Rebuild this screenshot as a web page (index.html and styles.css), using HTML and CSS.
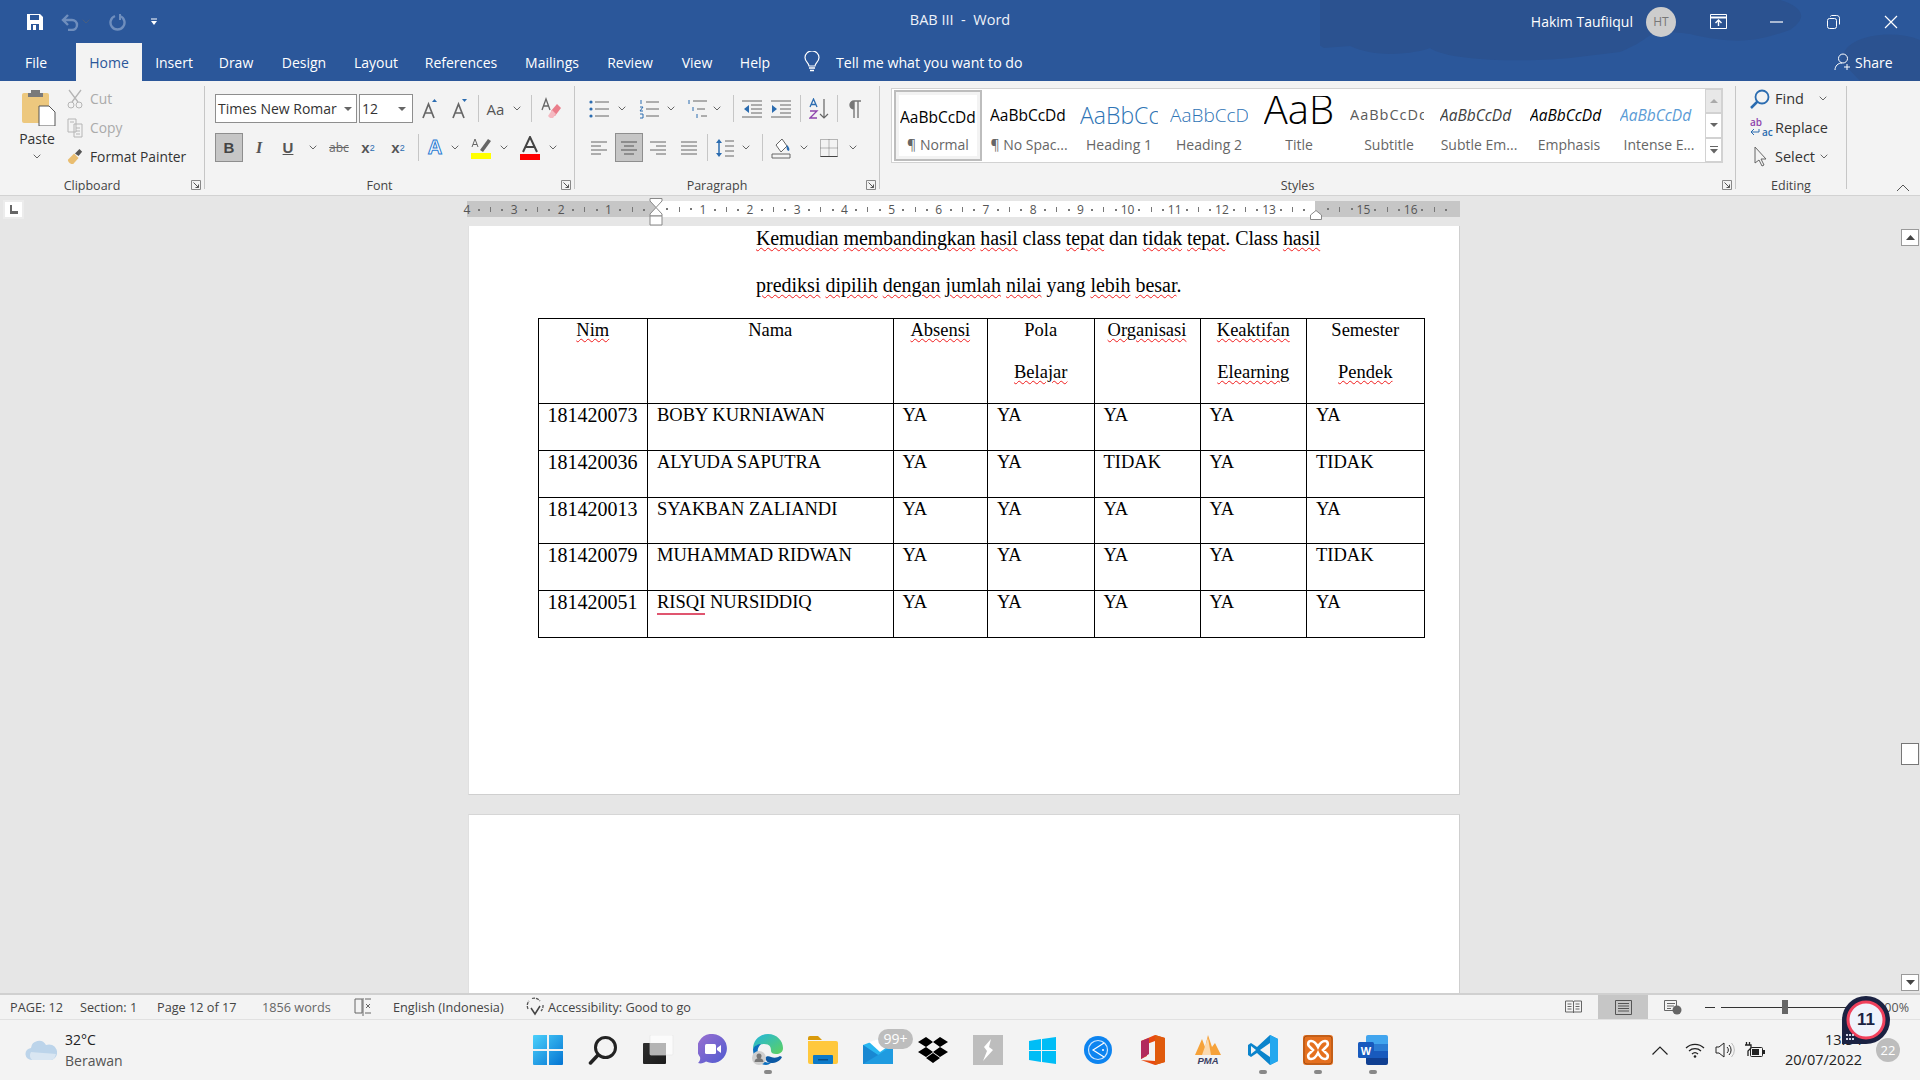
FILE: index.html
```html
<!DOCTYPE html>
<html lang="en">
<head>
<meta charset="utf-8">
<title>BAB III - Word</title>
<link rel="stylesheet" href="styles.css">
</head>
<body>
<svg class="defs" width="0" height="0">
  <symbol id="chev" viewBox="0 0 8 5"><path d="M.7.7 4 4 7.3.7" fill="none" stroke="#666" stroke-width="1"/></symbol>
  <symbol id="launch" viewBox="0 0 10 10"><path d="M.5 9.5V.5h9v9z" fill="none" stroke="#888"/><path d="M2.5 2.5 7.5 7.5M7.5 4.5v3h-3" fill="none" stroke="#555"/></symbol>
</svg>
<div class="app">
  <div class="chrome">
    <svg class="brand" width="600" height="81" viewBox="0 0 600 81"><path d="M0 0C-10 20-10 42 4 48L30 46C60 60 100 52 110 48 130 62 210 62 250 58L300 52C340 36 320 28 370 34 420 46 440 40 470 30 500 10 460 0 460 0z" fill="#2b5290"/><path d="M522 62C520 36 570 28 600 40V81H540z" fill="#2b5290"/></svg>
    <header class="titlebar">
      <div class="qat">
        <svg width="18" height="18" viewBox="0 0 18 18"><path d="M1 1h13l3 3v13H1z" fill="#fff"/><path d="M4 2h9v5H4z" fill="#2b579a"/><path d="M5 11h8v6H5z" fill="#2b579a"/><path d="M7 12h3v5H7z" fill="#fff"/></svg>
        <svg class="qat-undo" width="20" height="18" viewBox="0 0 20 18"><path d="M8 2 3 7l5 5M3 7h9a5 5 0 0 1 0 10H8" fill="none" stroke="#6f8ebd" stroke-width="2.4"/></svg>
        <svg class="qat-chev" width="8" height="5"><use href="#chev"/></svg>
        <svg class="qat-redo" width="18" height="18" viewBox="0 0 18 18"><path d="M7 3a7 7 0 1 0 5 0" fill="none" stroke="#6f8ebd" stroke-width="2.4"/><path d="M11 1v6h2V1z" fill="#6f8ebd"/></svg>
        <svg class="qat-more" width="8" height="8" viewBox="0 0 8 8"><path d="M1 .5h6v1H1zM1 3h6L4 7z" fill="#fff"/></svg>
      </div>
      <div class="doc-title">BAB III &nbsp;-&nbsp; Word</div>
      <div class="win">
        <span class="user">Hakim Taufiiqul</span>
        <span class="avatar">HT</span>
        <span class="winbtn"><svg width="17" height="15" viewBox="0 0 17 15"><path d="M.5.5h16v14H.5z" fill="none" stroke="#fff"/><path d="M.5 3.5h16" stroke="#fff" stroke-width="2"/><path d="M8.5 12V6M5.5 9l3-3 3 3" fill="none" stroke="#fff" stroke-width="1.4"/></svg></span>
        <span class="winbtn"><svg width="13" height="2"><path d="M0 1h13" stroke="#fff" stroke-width="1.2"/></svg></span>
        <span class="winbtn"><svg width="13" height="14" viewBox="0 0 13 14"><rect x=".5" y="3.5" width="9" height="10" rx="2" fill="none" stroke="#fff"/><path d="M3.5 1.5c0-1 1-1 1-1h5c2 0 3 1 3 3v6" fill="none" stroke="#fff"/></svg></span>
        <span class="winbtn"><svg width="14" height="14"><path d="M1 1l12 12M13 1 1 13" stroke="#fff" stroke-width="1.2"/></svg></span>
      </div>
    </header>

    <nav class="tabs">
      <span class="file">File</span><span class="active">Home</span><span>Insert</span><span>Draw</span><span>Design</span><span>Layout</span><span>References</span><span>Mailings</span><span>Review</span><span>View</span><span>Help</span>
      <span class="tell"><svg width="16" height="22" viewBox="0 0 16 22"><path d="M5 15c0-3-4-4-4-8.500a7 6.500 0 0 1 14 0C15 11 11 12 11 15z" fill="none" stroke="#fff" stroke-width="1.200"/><path d="M5 17h6M6 19.500h4" stroke="#fff" stroke-width="1.500"/></svg><em>Tell me what you want to do</em></span>
      <span class="share"><svg width="18" height="18" viewBox="0 0 18 18"><circle cx="9" cy="5.500" r="4.500" fill="none" stroke="#fff"/><path d="M1 17c0-4 3-7 7-7" fill="none" stroke="#fff"/><path d="M13 11v6M10 14h6" stroke="#fff"/></svg>Share</span>
    </nav>
  </div>

  <section class="ribbon">
    <div class="group g-clip">
      <div class="clip-body">
        <div class="paste">
          <svg width="34" height="38" viewBox="0 0 34 38"><rect x="0" y="5" width="27" height="30" rx="2" fill="#edc87e"/><path d="M9 5V2h9v3h3v4H6V5z" fill="#7a7a7a"/><path d="M17 18h10l6 6v14H17z" fill="#fff" stroke="#555"/></svg>
          <span>Paste</span>
          <svg class="chev" width="8" height="5"><use href="#chev"/></svg>
        </div>
        <div class="clip-list">
          <div class="off"><svg width="16" height="20" viewBox="0 0 16 20"><path d="M2 1l9 12M14 1 5 13" stroke="#b5b5b5" stroke-width="1.300"/><circle cx="4" cy="16" r="3" fill="none" stroke="#b5b5b5"/><circle cx="12" cy="16" r="3" fill="none" stroke="#b5b5b5"/></svg>Cut</div>
          <div class="off"><svg width="16" height="20" viewBox="0 0 16 20"><path d="M1 1h8v13H1zM7 6h8v13H7z" fill="#f3f3f3" stroke="#b5b5b5"/><path d="M9 10h4M9 13h4M9 16h4M3 4h4" stroke="#b5b5b5"/></svg>Copy</div>
          <div><svg width="16" height="20" viewBox="0 0 18 20"><path d="M1 13l7-7 5 5-6 7c-3 0-6-2-6-5z" fill="#e9bd70"/><path d="M9 6l5-5 3 3-4 5z" fill="#555"/></svg>Format Painter</div>
        </div>
      </div>
      <div class="glabel">Clipboard<svg class="launch" width="10" height="10"><use href="#launch"/></svg></div>
    </div>

    <div class="group g-font">
      <div class="font-rows">
        <div class="rw rw1">
          <div class="combo c-name"><span>Times New Romar</span><i></i></div>
          <div class="combo c-size"><span>12</span><i></i></div>
          <span class="tb w30 m2"><svg width="16" height="20" viewBox="0 0 16 20"><path d="M1 19 6.500 5 12 19M3 14h7" fill="none" stroke="#666" stroke-width="1.700"/><path d="M10 3l2.500-3L15 3z" fill="#2b6cb0"/></svg></span>
          <span class="tb w30"><svg width="16" height="20" viewBox="0 0 16 20"><path d="M1 19 6.500 5 12 19M3 14h7" fill="none" stroke="#666" stroke-width="1.700"/><path d="M10 0l2.500 3L15 0z" fill="#2b6cb0"/></svg></span>
          <i class="sep s-a"></i>
          <span class="tb aa">Aa</span><svg class="chev c1" width="8" height="5"><use href="#chev"/></svg>
          <i class="sep s-b"></i>
          <span class="tb w38"><svg width="20" height="24" viewBox="0 0 20 24"><path d="M10 14l6-7 4 4-6 8h-2z" fill="#ea7d8a"/><path d="M7 19l4-6 4 4-3 4H9z" fill="#f5b8c0"/><path d="M1 13 5 2l4 11M2.500 9h5" fill="none" stroke="#666" stroke-width="1.300"/></svg></span>
        </div>
        <div class="rw rw2">
          <span class="tb sel b w28">B</span>
          <span class="tb it w28 m2">I</span>
          <span class="tb un w30">U</span>
          <svg class="chev c2" width="8" height="5"><use href="#chev"/></svg>
          <span class="tb st w30">abc</span>
          <span class="tb sc w28">x<sub>2</sub></span>
          <span class="tb sc w32">x<sup>2</sup></span>
          <i class="sep s-c"></i>
          <span class="tb fx w28">A</span>
          <svg class="chev c3" width="8" height="5"><use href="#chev"/></svg>
          <span class="tb w28 m8"><svg width="20" height="24" viewBox="0 0 20 24"><path d="M0 17h20v6H0z" fill="#ffff00"/><path d="M9 14 17 3l3 2-8 11z" fill="#666"/><path d="M1 11 4 3l3 8M2 8.500h4" fill="none" stroke="#666" stroke-width="1"/></svg></span>
          <svg class="chev c4" width="8" height="5"><use href="#chev"/></svg>
          <span class="tb w28 m8"><svg width="20" height="24" viewBox="0 0 20 24"><path d="M0 18h20v6H0z" fill="#ff0000"/><path d="M3 16 10 1l7 15M5.500 11h9" fill="none" stroke="#444" stroke-width="2"/></svg></span>
          <svg class="chev c5" width="8" height="5"><use href="#chev"/></svg>
        </div>
      </div>
      <div class="glabel">Font<svg class="launch" width="10" height="10"><use href="#launch"/></svg></div>
    </div>

    <div class="group g-para">
      <div class="font-rows">
        <div class="rw rw3">
          <span class="tb w22"><svg width="20" height="18" viewBox="0 0 20 18"><path d="M6 2h14M6 9h14M6 16h14" stroke="#666"/><circle cx="2" cy="2" r="1.600" fill="#2b6cb0"/><circle cx="2" cy="9" r="1.600" fill="#2b6cb0"/><circle cx="2" cy="16" r="1.600" fill="#2b6cb0"/></svg></span>
          <svg class="chev m8" width="8" height="5"><use href="#chev"/></svg>
          <span class="tb w22 m12"><svg width="20" height="20" viewBox="0 0 20 20"><path d="M7 3h13M7 10h13M7 17h13" stroke="#666"/><path d="M2 1v4M1 8h3l-3 4h3M1 15h3v4H1" fill="none" stroke="#2b6cb0"/></svg></span>
          <svg class="chev m7" width="8" height="5"><use href="#chev"/></svg>
          <span class="tb w22 m11"><svg width="20" height="20" viewBox="0 0 20 20"><path d="M6 2h14M10 10h8M14 17h6" stroke="#666"/><path d="M2 1v4M6 8v4M10 15v4" stroke="#2b6cb0"/></svg></span>
          <svg class="chev m5" width="8" height="5"><use href="#chev"/></svg>
          <i class="sep m12"></i>
          <span class="tb w26 m5"><svg width="20" height="18" viewBox="0 0 20 18"><path d="M0 1h20M9 5h11M9 9h11M9 13h11M0 17h20" stroke="#666"/><path d="M7 5 2 9l5 4z" fill="#2b6cb0"/></svg></span>
          <span class="tb w26 m3"><svg width="20" height="18" viewBox="0 0 20 18"><path d="M0 1h20M9 5h11M9 9h11M9 13h11M0 17h20" stroke="#666"/><path d="M1 5l5 4-5 4z" fill="#2b6cb0"/></svg></span>
          <i class="sep m6"></i>
          <span class="tb w26 m6"><svg width="22" height="22" viewBox="0 0 22 22"><path d="M1 9 4.500 1 8 9M2 6.500h5" fill="none" stroke="#2b6cb0" stroke-width="1.300"/><path d="M1 13h7l-7 7h7" fill="none" stroke="#8e44ad" stroke-width="1.300"/><path d="M15 1v19M11 16l4 4 4-4" fill="none" stroke="#666" stroke-width="1.200"/></svg></span>
          <i class="sep m4"></i>
          <span class="tb w26 m4"><svg width="12" height="18" viewBox="0 0 12 18"><path d="M5 1h7M5 1a4 4 0 0 0 0 8zM5 1v17M9 1v17" fill="#777" stroke="#777" stroke-width="1.400"/></svg></span>
        </div>
        <div class="rw rw4">
          <span class="tb w28"><svg width="16" height="14" viewBox="0 0 16 14"><path d="M0 1h16M0 5h10M0 9h16M0 13h10" stroke="#666"/></svg></span>
          <span class="tb sel w28 m2"><svg width="16" height="14" viewBox="0 0 16 14"><path d="M0 1h16M3 5h10M0 9h16M3 13h10" stroke="#555"/></svg></span>
          <span class="tb w30"><svg width="16" height="14" viewBox="0 0 16 14"><path d="M0 1h16M6 5h10M0 9h16M6 13h10" stroke="#666"/></svg></span>
          <span class="tb w30 m1"><svg width="16" height="14" viewBox="0 0 16 14"><path d="M0 1h16M0 5h16M0 9h16M0 13h16" stroke="#666"/></svg></span>
          <i class="sep m3"></i>
          <span class="tb w28 m3"><svg width="18" height="20" viewBox="0 0 18 20"><path d="M3 4v12" stroke="#2b6cb0" stroke-width="1.500"/><path d="M0 5l3-4 3 4zM0 15l3 4 3-4z" fill="#2b6cb0"/><path d="M9 3h9M9 8h9M9 13h9M9 18h9" stroke="#666"/></svg></span>
          <svg class="chev m3" width="8" height="5"><use href="#chev"/></svg>
          <i class="sep m12"></i>
          <span class="tb w28 m4"><svg width="20" height="22" viewBox="0 0 20 22"><path d="M5 8l6-6 5 7-6 6z" fill="#fff" stroke="#666"/><path d="M16 8c2 2 3 4 2 6-2 0-3-3-2-6z" fill="#2b6cb0"/><path d="M1 17h18v4H1z" fill="#f3f3f3" stroke="#666"/></svg></span>
          <svg class="chev m5" width="8" height="5"><use href="#chev"/></svg>
          <span class="tb w28 m7"><svg width="18" height="18" viewBox="0 0 18 18"><path d="M.5.5h17v17H.5zM9 .5v17M.5 9h17" fill="none" stroke="#777" stroke-dasharray="1 1"/><path d="M.5 17.500h17" stroke="#444"/></svg></span>
          <svg class="chev m6" width="8" height="5"><use href="#chev"/></svg>
        </div>
      </div>
      <div class="glabel">Paragraph<svg class="launch" width="10" height="10"><use href="#launch"/></svg></div>
    </div>

    <div class="group g-styles">
      <div class="gallery">
        <div class="style cur"><b class="p-n">AaBbCcDd</b><span>¶ Normal</span></div>
        <div class="style"><b class="p-n">AaBbCcDd</b><span>¶ No Spac...</span></div>
        <div class="style"><b class="p-h1">AaBbCcDd</b><span>Heading 1</span></div>
        <div class="style"><b class="p-h2">AaBbCcDd</b><span>Heading 2</span></div>
        <div class="style"><b class="p-t">AaB</b><span>Title</span></div>
        <div class="style"><b class="p-sub">AaBbCcDd</b><span>Subtitle</span></div>
        <div class="style"><b class="p-se">AaBbCcDd</b><span>Subtle Em...</span></div>
        <div class="style"><b class="p-em">AaBbCcDd</b><span>Emphasis</span></div>
        <div class="style"><b class="p-ie">AaBbCcDd</b><span>Intense E...</span></div>
        <div class="gal-btns">
          <span class="gb up"><svg width="8" height="4"><path d="M4 0l4 4H0z" fill="#aaa"/></svg></span>
          <span class="gb"><svg width="8" height="4"><path d="M0 0h8L4 4z" fill="#666"/></svg></span>
          <span class="gb"><svg width="8" height="8"><path d="M0 0h8v1H0zM0 3h8L4 7.500z" fill="#666"/></svg></span>
        </div>
      </div>
      <div class="glabel">Styles<svg class="launch" width="10" height="10"><use href="#launch"/></svg></div>
    </div>

    <div class="group g-edit">
      <div class="edit-list">
        <div><svg width="20" height="20" viewBox="0 0 20 20"><circle cx="12" cy="8" r="6.500" fill="none" stroke="#2b6cb0" stroke-width="1.800"/><path d="M7.500 12.500 1 19" stroke="#2b6cb0" stroke-width="2.500"/></svg>Find<svg class="chev c12" width="8" height="5"><use href="#chev"/></svg></div>
        <div><small class="abc"><u>ab</u><span class="abc-row"><svg width="10" height="8" viewBox="0 0 10 8"><path d="M9 1v3H1M4 1 1 4l3 3" fill="none" stroke="#2b6cb0"/></svg><u>ac</u></span></small>Replace</div>
        <div><svg width="20" height="22" viewBox="0 0 14 22"><path d="M2 1v16l4-3 3 6 2-1-3-6h5z" fill="#f3f3f3" stroke="#666"/></svg>Select<svg class="chev c13" width="8" height="5"><use href="#chev"/></svg></div>
      </div>
      <div class="glabel">Editing</div>
    </div>
    <svg class="collapse" width="14" height="8" viewBox="0 0 14 8"><path d="M1 7l6-6 6 6" fill="none" stroke="#555"/></svg>
  </section>

  <main class="work">
    <div class="docview">
      <div class="ruler-row">
        <span class="corner"><svg width="9" height="9"><path d="M1 0h2v6h6v3H1z" fill="#666"/></svg></span>
        <div class="ruler">
          <div class="cms">
            <span class="cm"><b>4</b><i></i><u></u><i></i></span><span class="cm"><b>3</b><i></i><u></u><i></i></span><span class="cm"><b>2</b><i></i><u></u><i></i></span><span class="cm"><b>1</b><i></i><u></u><i></i></span><span class="cm"><b></b><i></i><u></u><i></i></span><span class="cm"><b>1</b><i></i><u></u><i></i></span><span class="cm"><b>2</b><i></i><u></u><i></i></span><span class="cm"><b>3</b><i></i><u></u><i></i></span><span class="cm"><b>4</b><i></i><u></u><i></i></span><span class="cm"><b>5</b><i></i><u></u><i></i></span><span class="cm"><b>6</b><i></i><u></u><i></i></span><span class="cm"><b>7</b><i></i><u></u><i></i></span><span class="cm"><b>8</b><i></i><u></u><i></i></span><span class="cm"><b>9</b><i></i><u></u><i></i></span><span class="cm"><b>10</b><i></i><u></u><i></i></span><span class="cm"><b>11</b><i></i><u></u><i></i></span><span class="cm"><b>12</b><i></i><u></u><i></i></span><span class="cm"><b>13</b><i></i><u></u><i></i></span><span class="cm"><b></b><i></i><u></u><i></i></span><span class="cm"><b>15</b><i></i><u></u><i></i></span><span class="cm"><b>16</b><i></i><u></u><i></i></span>
          </div>
          <svg class="m-left" width="14" height="28" viewBox="0 0 14 28"><path d="M1 .5h12V3L7 9.500 1 3z" fill="#fff" stroke="#888"/><path d="M7 9.500 13 16v2H1v-2z" fill="#fff" stroke="#888"/><path d="M1 18h12v9H1z" fill="#fff" stroke="#888"/></svg>
          <svg class="m-right" width="12" height="10" viewBox="0 0 12 10"><path d="M6 .5 11.500 5v4.500H.5V5z" fill="#fff" stroke="#888"/></svg>
        </div>
      </div>
      <div class="pages">
        <article class="page p1">
          <p class="tight"><span class="sp">Kemudian</span> <span class="sp">membandingkan</span> <span class="sp">hasil</span> class <span class="sp">tepat</span> dan <span class="sp">tidak</span> <span class="sp">tepat</span>. Class <span class="sp">hasil</span></p>
          <p><span class="sp">prediksi</span> <span class="sp">dipilih</span> <span class="sp">dengan</span> <span class="sp">jumlah</span> <span class="sp">nilai</span> yang <span class="sp">lebih</span> <span class="sp">besar</span>.</p>
          <table>
            <colgroup><col class="c-nim"><col class="c-nama"><col class="c-abs"><col class="c-pola"><col class="c-org"><col class="c-kea"><col class="c-sem"></colgroup>
            <thead><tr><th><span class="sp">Nim</span></th><th>Nama</th><th><span class="sp">Absensi</span></th><th>Pola<div class="l2"><span class="sp">Belajar</span></div></th><th><span class="sp">Organisasi</span></th><th><span class="sp">Keaktifan</span><div class="l2"><span class="sp">Elearning</span></div></th><th>Semester<div class="l2"><span class="sp">Pendek</span></div></th></tr></thead>
            <tbody>
              <tr><td class="nim">181420073</td><td>BOBY KURNIAWAN</td><td>YA</td><td>YA</td><td>YA</td><td>YA</td><td>YA</td></tr>
              <tr><td class="nim">181420036</td><td>ALYUDA SAPUTRA</td><td>YA</td><td>YA</td><td>TIDAK</td><td>YA</td><td>TIDAK</td></tr>
              <tr><td class="nim">181420013</td><td>SYAKBAN ZALIANDI</td><td>YA</td><td>YA</td><td>YA</td><td>YA</td><td>YA</td></tr>
              <tr><td class="nim">181420079</td><td>MUHAMMAD RIDWAN</td><td>YA</td><td>YA</td><td>YA</td><td>YA</td><td>TIDAK</td></tr>
              <tr><td class="nim">181420051</td><td><span class="gram">RISQI</span> NURSIDDIQ</td><td>YA</td><td>YA</td><td>YA</td><td>YA</td><td>YA</td></tr>
            </tbody>
          </table>
        </article>
        <article class="page p2"></article>
      </div>
    </div>
    <aside class="scroll">
      <span class="sbtn"><svg width="9" height="5"><path d="M4.500 0 9 5H0z" fill="#444"/></svg></span>
      <span class="thumb"></span>
      <span class="sbtn"><svg width="9" height="5"><path d="M0 0h9L4.500 5z" fill="#444"/></svg></span>
    </aside>
  </main>

  <footer class="status">
    <div class="st-left">
      <span>PAGE: 12</span><span>Section: 1</span><span>Page 12 of 17</span><span class="dim">1856 words</span>
      <span><svg width="18" height="18" viewBox="0 0 18 18"><path d="M8 1H1v14h7zM9 0v18" fill="none" stroke="#666"/><path d="M11 1h6M12 6l4 4M16 6l-4 4M11 15h6" fill="none" stroke="#666"/></svg></span>
      <span>English (Indonesia)</span>
      <span class="acc"><svg width="20" height="20" viewBox="0 0 20 20"><path d="M3 12a7.500 7.500 0 0 1 1-8M7 1.500a7.500 7.500 0 0 1 8 2.500M18 8a7.500 7.500 0 0 1-2 6" fill="none" stroke="#555" stroke-width="1.300" stroke-dasharray="3 1"/><path d="M6 11l4 6 5-8" fill="none" stroke="#444" stroke-width="1.500"/></svg></span>
      <span>Accessibility: Good to go</span>
    </div>
    <div class="st-right">
      <span class="vw"><svg width="17" height="14" viewBox="0 0 17 14"><path d="M.5 1h7.500l.5 1 .5-1h7.500v11H.5zM8.500 2v11M2.500 4h4M2.500 6.500h4M2.500 9h4M10.500 4h4M10.500 6.500h4M10.500 9h4" fill="none" stroke="#666"/></svg></span>
      <span class="vw on"><svg width="17" height="15" viewBox="0 0 17 15"><path d="M.5.500h16v14H.5zM3 3.500h11M3 6h11M3 8.500h11M3 11h11" fill="none" stroke="#555"/></svg></span>
      <span class="vw"><svg width="18" height="15" viewBox="0 0 18 15"><path d="M.5.500h12v10H.5zM3 3.500h8M3 6h7M3 8.500h4" fill="none" stroke="#666"/><circle cx="13" cy="10" r="4.500" fill="#666"/></svg></span>
      <i class="minus"></i>
      <span class="slider"><i></i></span>
      <span class="pct">100%</span>
    </div>
    <div class="timer"><svg width="56" height="56" viewBox="0 0 56 56"><path d="M4 28a24 24 0 1 1 24 24H4z" fill="#1b2242"/><circle cx="28" cy="28" r="18" fill="#eff2fb" stroke="#f0405c" stroke-width="3"/><path d="M9 42v2M12 42v2M15 42v2M9 46v2M12 46v2M15 46v2" stroke="#cfd3e5" stroke-width="2"/></svg><b>11</b></div>
  </footer>

  <footer class="taskbar">
    <div class="weather">
      <svg width="32" height="22" viewBox="0 0 32 22"><path d="M7 21a6 6 0 0 1-1-12 8 8 0 0 1 15-3 6.500 6.500 0 0 1 6 15z" fill="#bcd4ea"/><path d="M7 21a6 6 0 0 1-1-8c6 1 18 1 25 2-1 3-2 6-5 6z" fill="#d9e6f2"/></svg>
      <div><span class="temp">32°C</span><span class="cond">Berawan</span></div>
    </div>
    <div class="apps">
      <span class="app-i"><svg width="30" height="30" viewBox="0 0 30 30"><defs><linearGradient id="w11" x1="0" y1="0" x2="1" y2="1"><stop offset="0" stop-color="#4bd0fb"/><stop offset="1" stop-color="#0474d2"/></linearGradient></defs><path d="M0 1a1 1 0 0 1 1-1h13v14H0zM16 0h13a1 1 0 0 1 1 1v13H16zM0 16h14v14H1a1 1 0 0 1-1-1zM16 16h14v13a1 1 0 0 1-1 1H16z" fill="url(#w11)"/></svg></span>
      <span class="app-i"><svg width="30" height="30" viewBox="0 0 30 30"><circle cx="17.500" cy="12.500" r="10" fill="none" stroke="#222" stroke-width="3"/><path d="M10 20 2.500 28" stroke="#222" stroke-width="3.500" stroke-linecap="round"/></svg></span>
      <span class="app-i"><svg width="32" height="30" viewBox="0 0 32 30"><defs><linearGradient id="tv" x1="0" y1="0" x2="1" y2="1"><stop offset="0" stop-color="#2e2e2e"/><stop offset="1" stop-color="#1b1b1b"/></linearGradient></defs><rect x="1" y="8" width="23" height="21" rx="1" fill="url(#tv)"/><rect x="8" y="0" width="23" height="20" rx="1" fill="#fbfbfb" stroke="#e6e6e6" stroke-width=".6"/><rect x="8" y="8" width="16" height="12" fill="#b4b4b4"/></svg></span>
      <span class="app-i"><svg width="30" height="32" viewBox="0 0 30 32"><defs><linearGradient id="chat" x1="0" y1="0" x2="1" y2="1"><stop offset="0" stop-color="#9a6fd0"/><stop offset="1" stop-color="#4f5bd0"/></linearGradient></defs><path d="M15 0a14.500 14.500 0 1 1-7 27.500C6 29 3 30 0 29c2-2 2.500-4 2-6A14.500 14.500 0 0 1 15 0z" fill="url(#chat)"/><rect x="7" y="10" width="11" height="10" rx="1.500" fill="#fff"/><path d="M19 14l4-3v8l-4-3z" fill="#fff"/></svg></span>
      <span class="app-i dot"><svg width="32" height="32" viewBox="0 0 32 32"><defs><linearGradient id="edge1" x1="0" y1="0" x2="1" y2="1"><stop offset="0" stop-color="#22b6e0"/><stop offset="1" stop-color="#5ed15d"/></linearGradient></defs><path d="M1 15C1 6 8 0 16 0c9 0 15 7 15 14 0 4-3 6-7 6-3 0-5-1-5-3 0-4-1-7-7-7-6 0-10 3-11 5z" fill="url(#edge1)"/><path d="M1 15c1-3 5-5 8-5-3 3-4 6-3 10 1 5 6 9 13 9-2 1-3 2-5 2C7 31 1 24 1 15z" fill="#0b6fbf"/><path d="M19 29c5 0 9-2 11-6l-2-1c-3 2-6 2-9 1-2-1-5-1-6 1 1 3 3 5 6 5z" fill="#0c59a4"/><circle cx="7" cy="24" r="7" fill="#cfcfcf"/><circle cx="7" cy="22" r="2.500" fill="#777"/><path d="M2.500 28a4.500 4 0 0 1 9 0z" fill="#777"/></svg></span>
      <span class="app-i"><svg width="30" height="28" viewBox="0 0 30 28"><path d="M0 2a2 2 0 0 1 2-2h8l4 4H0z" fill="#d99a0b"/><path d="M0 5h28a2 2 0 0 1 2 2v19a2 2 0 0 1-2 2H2a2 2 0 0 1-2-2z" fill="#ffc83d"/><rect x="5" y="19" width="20" height="9" rx="1" fill="#0c7ac9"/><rect x="10" y="23" width="10" height="1.500" fill="#064e87"/></svg></span>
      <span class="app-i mail"><svg width="30" height="28" viewBox="0 0 30 28"><path d="M0 9 24 0l6 9v19H0z" fill="#29b6f0"/><path d="M6 6 24 0l3 9-10 7z" fill="#fff"/><path d="M0 9l15 10L30 9v19H0z" fill="#1f9be0"/><path d="M0 28V9l15 10z" fill="#1888d2"/></svg><em class="badge">99+</em></span>
      <span class="app-i"><svg width="30" height="26" viewBox="0 0 30 26"><path d="M8 0l7 5-7 5-8-5zM22 0l8 5-8 5-7-5zM0 15l8-5 7 5-7 5zM30 15l-8-5-7 5 7 5zM8 21l7-5 7 5-7 5z" fill="#000"/></svg></span>
      <span class="app-i"><svg width="30" height="30" viewBox="0 0 30 30"><path d="M0 0h30v30H0z" fill="#bdbdbd"/><path d="M18 4 11 12l3 4-4 10 10-11-4-3z" fill="#fff"/></svg></span>
      <span class="app-i"><svg width="27" height="27" viewBox="0 0 27 27"><path d="M0 4 12 2v11H0zM13 2 27 0v13H13zM0 14h12v11L0 23zM13 14h14v13l-14-2z" fill="#00bdf6"/></svg></span>
      <span class="app-i"><svg width="28" height="28" viewBox="0 0 28 28"><circle cx="14" cy="14" r="14" fill="#0d84f0"/><circle cx="14" cy="14" r="9.500" fill="none" stroke="#cfe6fd" stroke-width="1.200"/><path d="M20 7 9 14l11 7" fill="none" stroke="#fff" stroke-width="1.200"/><circle cx="19" cy="14" r="1" fill="#fff"/></svg></span>
      <span class="app-i"><svg width="24" height="30" viewBox="0 0 24 30"><path d="M0 6 14 0l10 3v24l-10 3L0 25l14 1V6L6 9v12l-6 3z" fill="#e84a10"/><path d="M14 0l10 3v24l-10 3z" fill="#e05a0c"/><path d="M0 6l8-3v16l-8 5z" fill="#b22a5d"/></svg></span>
      <span class="app-i"><svg width="30" height="30" viewBox="0 0 30 30"><path d="M2 20 9 4l3 8 3-12 4 12 3-4 6 12z" fill="#f6a23a"/><path d="M9 20 15 3l3 17z" fill="#fff" fill-opacity=".6"/><text x="15" y="29" text-anchor="middle" class="pma">PMA</text></svg></span>
      <span class="app-i dot"><svg width="30" height="30" viewBox="0 0 30 30"><path d="M22 0l8 4v22l-8 4-13-12-6 4-3-2V10l3-2 6 4z" fill="#0b84cc"/><path d="M22 0l8 4v22l-8 4z" fill="#24a8ef"/><path d="M22 8 12 15l10 7z" fill="#f3f3f3"/><path d="M3 11l5 4-5 4z" fill="#f3f3f3"/></svg></span>
      <span class="app-i dot"><svg width="30" height="30" viewBox="0 0 30 30"><rect width="30" height="30" rx="3" fill="#e5701f"/><rect x="1" y="1" width="28" height="28" rx="3" fill="none" stroke="#a34e13"/><path d="M8 6c3 0 5 2 7 6 2-4 4-6 7-6 3 0 4 4 1 6l-3 3 3 3c3 2 2 6-1 6-3 0-5-2-7-6-2 4-4 6-7 6-3 0-4-4-1-6l3-3-3-3c-3-2-2-6 1-6z" fill="none" stroke="#fff" stroke-width="2.600"/></svg></span>
      <span class="app-i dot"><svg width="30" height="30" viewBox="0 0 30 30"><path d="M8 2a2 2 0 0 1 2-2h18a2 2 0 0 1 2 2v7H8z" fill="#41a5ee"/><path d="M8 9h22v7H8z" fill="#2b7cd3"/><path d="M8 16h22v7H8z" fill="#185abd"/><path d="M8 23h22v5a2 2 0 0 1-2 2H10a2 2 0 0 1-2-2z" fill="#103f91"/><rect x="0" y="7" width="16" height="16" rx="1.500" fill="#185abd"/><text x="8" y="19.500" text-anchor="middle" class="wd">W</text></svg></span>
    </div>
    <div class="tray">
      <svg class="t-chev" width="16" height="9" viewBox="0 0 16 9"><path d="M.5 8.500 8 1l7.500 7.500" fill="none" stroke="#222" stroke-width="1.200"/></svg>
      <svg class="t-wifi" width="20" height="15" viewBox="0 0 20 15"><path d="M1 5a13 13 0 0 1 18 0M4 8a9 9 0 0 1 12 0M7 11a4.500 4.500 0 0 1 6 0" fill="none" stroke="#222" stroke-width="1.300"/><circle cx="10" cy="13.500" r="1.300" fill="#222"/></svg>
      <svg class="t-vol" width="20" height="16" viewBox="0 0 20 16"><path d="M1 5h3l5-4v14l-5-4H1z" fill="none" stroke="#222"/><path d="M12 5a4 4 0 0 1 0 6M14 3a7 7 0 0 1 0 10" fill="none" stroke="#222"/><path d="M16.500 1a10 10 0 0 1 0 14" fill="none" stroke="#bbb"/></svg>
      <svg class="t-bat" width="20" height="16" viewBox="0 0 20 16"><rect x="5.500" y="5.500" width="12" height="9" rx="1" fill="#f3f3f3" stroke="#222"/><rect x="7" y="7" width="7" height="6" fill="#222"/><rect x="18" y="8" width="2" height="4" fill="#222"/><path d="M1.500 0v3M4.500 0v3M0 3h6v3L3 9v5" fill="none" stroke="#222" stroke-width="1.300"/></svg>
      <div class="clock"><span>13:34</span><span>20/07/2022</span></div>
      <span class="notif">22</span>
    </div>
  </footer>
</div>
</body>
</html>
```
FILE: styles.css
```css
*{box-sizing:border-box}
html,body{margin:0;padding:0}
body{width:1920px;height:1080px;overflow:hidden;font-family:"Open Sans","Noto Sans",sans-serif;color:#444}
.defs{position:absolute}
.app{display:flex;flex-direction:column;height:1080px}

/* title bar */
.chrome{height:81px;background:#2b579a;position:relative;flex:none}
.brand{position:absolute;right:0;top:0}
.titlebar{height:43px;display:grid;grid-template-columns:1fr auto 1fr;align-items:center;color:#fff;position:relative}
.qat{display:flex;align-items:center;padding-left:26px;height:38px}
.qat-undo{margin-left:16px}
.qat-chev{margin-left:2px;opacity:.5}
.qat-redo{margin-left:18px}
.qat-more{margin-left:24px}
.doc-title{font-size:14.500px;padding-bottom:5px;color:#eef2f9}
.win{display:flex;align-items:center;justify-content:flex-end;height:38px;font-size:14px}
.user{margin-right:13px}
.avatar{width:30px;height:30px;border-radius:50%;background:#cdcdcd;color:#777;font-size:12px;display:flex;align-items:center;justify-content:center;margin-right:14px}
.winbtn{width:57.500px;display:flex;justify-content:center}

/* tabs */
.tabs{height:38px;display:grid;grid-template-columns:76px 66px 64px 60px 76px 68px 102px 80px 76px 58px 58px 252px 1fr 86px;color:#fff;font-size:14px;align-items:stretch;position:relative}
.tabs>span{display:flex;align-items:center;justify-content:center}
.tabs .file{padding-right:4px}
.tabs .active{background:#f3f3f3;color:#2b579a}
.tabs .tell{justify-content:flex-start;padding-left:20px;grid-column:12}
.tell em{font-style:normal;margin-left:16px;white-space:nowrap;font-size:14.200px}
.tabs .share{grid-column:14;justify-content:flex-start;gap:3px}

/* ribbon */
.ribbon{height:115px;background:#f3f3f3;border-bottom:1px solid #d2d2d2;display:flex;position:relative;font-size:14px;flex:none}
.group{position:relative;border-right:1px solid #c6c6c6;margin:5px 0 6px;display:flex;flex-direction:column}
.g-clip{width:205px}
.g-font{width:370px}
.g-para{width:305px}
.g-styles{width:856px}
.g-edit{width:111px}
.glabel{position:absolute;left:0;right:0;bottom:-6px;height:18px;padding-right:20px;text-align:center;font-size:12.500px;color:#444;line-height:18px}
.g-edit .glabel{padding-right:0}
.launch{position:absolute;right:3px;top:3px}
.collapse{position:absolute;left:1896px;top:103px}
.clip-body{display:flex;padding:2px 0 0 20px}
.paste{width:34px;display:flex;flex-direction:column;align-items:center;font-size:14px;color:#333}
.paste svg:first-child{margin-left:3px;flex:none}
.paste span{margin-top:4px;line-height:18px}
.paste .chev{margin-top:6px}
.clip-list{margin-left:13px;display:flex;flex-direction:column;margin-top:-4px}
.clip-list div{height:29px;display:flex;align-items:center;gap:7px;white-space:nowrap;color:#333;font-size:13.800px}
.clip-list .off{color:#aaa}
.font-rows{display:flex;flex-direction:column;gap:10px;padding-top:8px;padding-left:10px}
.rw{display:flex;align-items:center;height:29px}
.combo{height:29px;background:#fff;border:1px solid #8e8e8e;display:flex;align-items:center;justify-content:space-between;padding:0 4px 0 2px;color:#333;font-size:14px;white-space:nowrap;overflow:hidden}
.combo i{width:0;height:0;border:4px solid transparent;border-top:4px solid #666;border-bottom:0;flex:none}
.c-name{width:142px}
.c-size{width:54px;margin-left:2px;padding-right:6px}
.tb{display:flex;align-items:center;justify-content:center;height:29px;flex:none;color:#555}
.w22{width:22px}.w26{width:26px}.w28{width:28px}.w30{width:30px}.w32{width:32px}.w38{width:38px}
.m1{margin-left:1px}.m2{margin-left:2px}.m3{margin-left:3px}.m4{margin-left:4px}.m5{margin-left:5px}.m6{margin-left:6px}.m7{margin-left:7px}.m8{margin-left:8px}.m11{margin-left:11px}.m12{margin-left:12px}
.sel{background:#c6c6c6;border:1px solid #8e8e8e}
.b{font:bold 15px "Liberation Sans",sans-serif;color:#444}
.it{font:italic bold 16px "Liberation Serif",serif;color:#555}
.un{font:bold 15px "Liberation Sans",sans-serif;text-decoration:underline;color:#555}
.st{font-size:12px;text-decoration:line-through;color:#666}
.sc{font:bold 15px "Liberation Sans",sans-serif;color:#555}
.sc sub,.sc sup{font-size:9px;color:#2b6cb0;font-weight:400}
.fx{font:bold 20px "Liberation Sans",sans-serif;color:#fff;-webkit-text-stroke:1px #2b7cd3}
.aa{width:31px;margin-left:1px;font-size:15px}
.sep{width:1px;height:27px;background:#c6c6c6;flex:none;display:block}
.s-a{margin-left:3px}
.s-b{margin-left:10px}
.chev{flex:none}
.c1{margin-left:2px}
.c2{margin-left:6px}
.st.w30{margin-left:7px}
.s-c{margin-left:4px}
.rw2 .fx{margin-left:2px}
.c3{margin-left:2px}
.c4{margin-left:5px}
.c5{margin-left:5px}
.rw3{padding-left:3px}

/* styles gallery */
.gallery{margin:2px 0 0 11px;width:832px;height:75px;background:#fff;border:1px solid #d2d2d2;display:flex;padding-left:2px;position:relative}
.style{width:90px;height:73px;display:flex;flex-direction:column;align-items:center;overflow:hidden;flex:none;color:#666}
.style b{display:block;height:47px;width:78px;overflow:hidden;font-weight:400;text-align:left;white-space:nowrap;line-height:52px;font-family:"Open Sans","Noto Sans",sans-serif;color:#000;font-size:15.500px}
.style span{font-size:14px;line-height:20px;margin-top:-1px;white-space:nowrap}
.cur{border:5px solid #f3f3f3;outline:2px solid #bdbdbd;outline-offset:-2px;height:71px;margin:1px 2px 1px 0;width:88px}
.cur b{width:76px;height:37px;line-height:36px;margin-top:4px}
.cur span{margin-top:-1px}
.style .p-h1{font-size:23px;font-weight:300;color:#2e74b5}
.style .p-h2{font-size:19px;font-weight:300;color:#2e74b5}
.style .p-t{font-size:40px;font-weight:300;width:auto;line-height:26px;height:40px;margin-top:7px}
.style .p-sub{letter-spacing:1px;font-size:14.500px;width:74px;margin-right:4px;color:#5a5a5a}
.style .p-se{font-style:italic;color:#404040}
.style .p-em{font-style:italic}
.style .p-ie{font-style:italic;color:#5b9bd5}
.gal-btns{position:absolute;right:0;top:0;width:17px;height:73px;display:flex;flex-direction:column}
.gb{flex:1;border:1px solid #d2d2d2;background:#fff;display:flex;align-items:center;justify-content:center}
.gb.up{background:#e8e8e8}

/* editing */
.edit-list{margin-top:-2px;padding-left:14px;display:flex;flex-direction:column}
.edit-list div{height:29px;display:flex;align-items:center;gap:5px;color:#333;font-size:14.500px;position:relative}
.edit-list .c12{margin-left:10px}
.edit-list .c13{margin-left:0}
.abc{width:20px;height:22px;display:flex;flex-direction:column;font-size:10px;line-height:10px;font-weight:600}
.abc u{text-decoration:none;color:#8e44ad;width:12px}
.abc-row{display:flex;align-items:center;gap:2px}
.abc-row u{color:#2b6cb0;width:12px}
.abc-row svg{flex:none}

/* document */
.work{height:797px;display:flex;background:#e6e6e6;overflow:hidden;flex:none}
.docview{width:1900px;display:flex;flex-direction:column}
.ruler-row{height:30px;display:flex;align-items:flex-start;padding-top:5px;flex:none;position:relative;z-index:2}
.corner{width:21px;height:19px;margin:-1px 0 0 3px;background:#fff;border:2px solid #ececec;display:flex;align-items:center;justify-content:center}
.ruler{width:993px;height:16px;margin-left:443px;position:relative;background:linear-gradient(90deg,#c6c6c6 189px,#fff 189px,#fff 848px,#c6c6c6 848px)}
.cms{display:flex;margin-left:-6px;width:1000px;height:16px;overflow:visible}
.cm{width:47.200px;height:16px;display:grid;grid-template-columns:repeat(4,11.800px);align-items:center;justify-items:center;flex:none}
.cm b{font:400 12px "Open Sans",sans-serif;color:#555;white-space:nowrap;display:flex;justify-content:center;width:11.800px}
.cm i{width:2px;height:2px;background:#777}
.cm u{width:1px;height:5px;background:#777}
.cm:last-child{width:36px}
.m-left{position:absolute;left:182px;top:-3px}
.m-right{position:absolute;left:843px;top:9px}
.pages{flex:1;padding-left:468px;display:flex;flex-direction:column;gap:19px;overflow:hidden}
.page{width:992px;background:#fff;border-right:1px solid #cfcfcf;border-left:1px solid #e0e0e0;flex:none;font-family:"Liberation Serif",serif;color:#000}
.p1{height:569px;border-bottom:1px solid #cfcfcf}
.p2{height:179px;border-top:1px solid #d6d6d6}
.p1 p{margin:0 0 23px 287px;font-size:20px;line-height:24px;white-space:nowrap}
.p1 p.tight{letter-spacing:-.1px}
.p1 p:nth-of-type(2){margin-bottom:21px}
.sp{text-decoration:underline wavy #f01c1c 1px;text-underline-offset:2px}
.gram{border-bottom:2px solid #e0556f;display:inline-block;line-height:21px}
table{border-collapse:collapse;margin-left:68.500px;table-layout:fixed;width:886px;font-size:18.500px}
col.c-nim{width:109.500px}col.c-nama{width:245.500px}col.c-abs{width:94.500px}col.c-pola{width:106.500px}col.c-org{width:106px}col.c-kea{width:106.500px}col.c-sem{width:117.500px}
th,td{border:1px solid #000;vertical-align:top;line-height:22px;padding:0 0 0 9px;white-space:nowrap;font-weight:400}
th{padding:0;text-align:center;height:85px}
td{height:46.800px}
td.nim{font-size:20px;line-height:22px}
.l2{margin-top:20px}

/* scrollbar */
.scroll{width:20px;padding-top:33px;display:flex;flex-direction:column;align-items:center;position:relative}
.sbtn{width:18px;height:17px;background:#fff;border:1px solid #9a9a9a;display:flex;align-items:center;justify-content:center;flex:none}
.thumb{width:18px;height:22px;background:#fff;border:1px solid #777;margin:497px 0 209px;flex:none}

/* status */
.status{height:27px;background:#f3f3f3;border-top:2px solid #d0d0d0;border-bottom:1px solid #e1e1e1;display:flex;justify-content:space-between;position:relative;font-size:12.700px;z-index:3;flex:none}
.st-left{display:grid;grid-template-columns:70px 77px 105px 92px 39px 134px 21px auto;padding-left:10px;align-items:center;white-space:nowrap}
.st-left .dim{color:#666}
.st-left svg{display:block}
.st-left .acc{margin-left:-2px}
.st-right{display:flex;align-items:center;padding-right:11px}
.vw{width:50px;height:100%;display:flex;align-items:center;justify-content:center}
.vw.on{background:#c6c6c6}
.minus{width:10px;height:1px;background:#333;margin-left:7px;flex:none}
.slider{width:129px;height:1px;background:#333;margin-left:6px;position:relative;flex:none}
.slider i{position:absolute;left:61px;top:-7px;width:6px;height:14px;background:#666}
.pct{margin-left:13px;width:46px;text-align:right;color:#555;font-size:12.500px}
.timer{position:absolute;left:1838px;top:-3px;width:56px;height:56px;z-index:5}
.timer svg{display:block}
.timer b{position:absolute;left:0;right:0;top:0;height:56px;display:flex;align-items:center;justify-content:center;font:700 17px "Liberation Sans",sans-serif;color:#1b2242}

/* taskbar */
.taskbar{height:60px;background:#f3f3f3;display:grid;grid-template-columns:520px 880px 1fr;position:relative;flex:none}
.weather{display:flex;align-items:center;padding-left:25px;gap:8px}
.weather div{display:flex;flex-direction:column;gap:1px}
.temp{font-size:14px;line-height:20px;color:#222}
.cond{font-size:14px;line-height:20px;color:#555}
.apps{display:grid;grid-template-columns:repeat(16,55px)}
.app-i{display:flex;align-items:center;justify-content:center;position:relative;height:60px}
.app-i.dot::after{content:"";position:absolute;left:23.500px;bottom:6px;width:8px;height:4px;border-radius:2px;background:#888}
.badge{position:absolute;left:28px;top:9px;width:35px;height:20px;border-radius:10px;background:#bdbdbd;color:#fff;font-style:normal;font-size:14px;line-height:20px;text-align:center}
.pma{font:italic 800 9.500px "Liberation Sans",sans-serif;fill:#3b3f63}
.wd{font:700 11px "Liberation Sans",sans-serif;fill:#fff}
.tray{display:flex;align-items:center;padding-left:252px;color:#222}
.t-wifi{margin-left:17px}
.t-vol{margin-left:10px}
.t-bat{margin-left:10px}
.clock{width:97px;display:flex;flex-direction:column;align-items:flex-end;font-size:14.500px;line-height:20px;color:#222}
.notif{width:24px;height:24px;border-radius:50%;background:#bdbdbd;color:#fff;font-size:13px;display:flex;align-items:center;justify-content:center;margin-left:14px}
```
